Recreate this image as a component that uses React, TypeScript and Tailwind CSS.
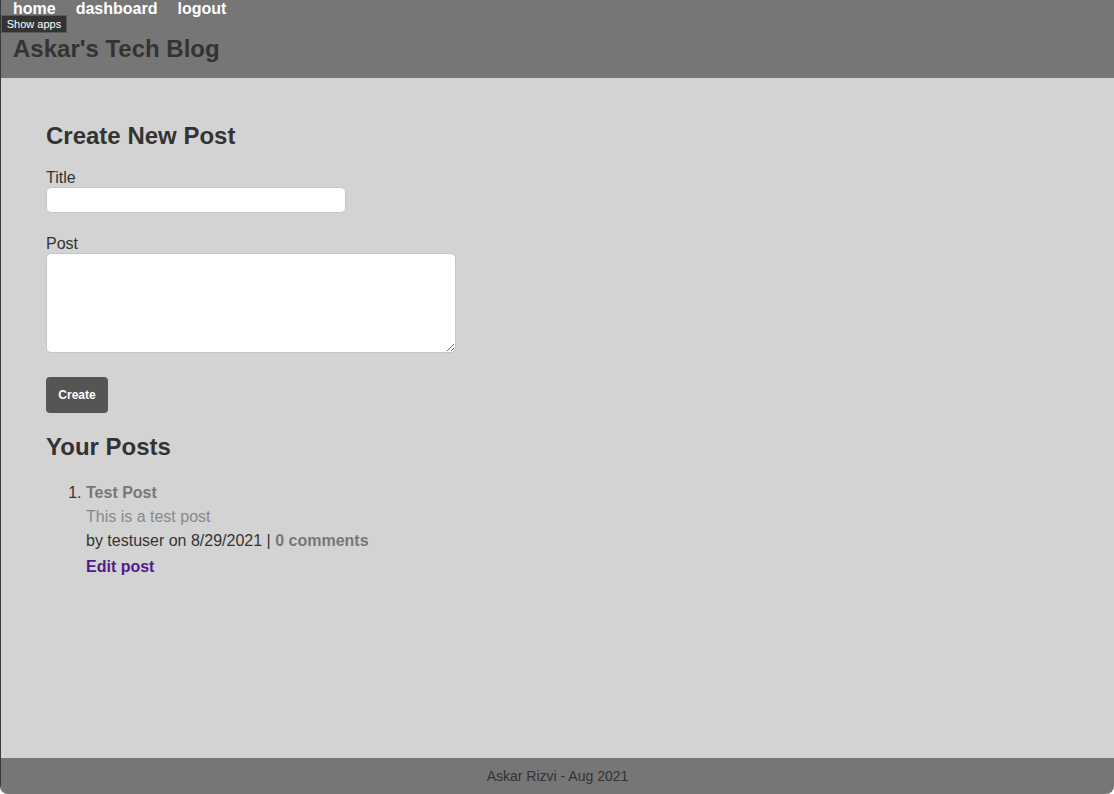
export default function App() {
  return (
    <div
      className="relative flex min-h-screen flex-col border-l border-[#3a3a3a] rounded-bl-lg rounded-br-lg overflow-hidden text-[#333]"
      style={{ fontFamily: '"Liberation Sans", Arial, sans-serif' }}
    >
      <header className="h-[78px] bg-[#767676] px-3">
        <nav className="flex gap-[20px] text-base font-bold leading-[17px] text-white">
          <a href="#">home</a>
          <a href="#">dashboard</a>
          <a href="#">logout</a>
        </nav>
        <h1 className="mt-[20px] text-[24px] font-bold leading-[24px] text-[#333]">Askar's Tech Blog</h1>
      </header>

      <div className="absolute left-0 top-[15px] flex h-[18px] w-[66px] items-center justify-center border border-[#5a5a5a] bg-[#333] text-[11px] text-white">
        Show apps
      </div>

      <main className="flex-1 bg-[#d3d3d3] px-[45px] pt-[44px]">
        <h2 className="text-[24px] font-bold leading-[28px]">Create New Post</h2>
        <form className="mt-[19px]">
          <label className="block text-base leading-[17px]">Title</label>
          <input className="mt-[1px] block h-[26px] w-[300px] rounded-[5px] border border-[#c4c4c4] bg-white" />
          <label className="mt-[22px] block text-base leading-[17px]">Post</label>
          <textarea className="mt-[1px] block h-[100px] w-[410px] rounded-[5px] border border-[#c4c4c4] bg-white" />
          <button
            type="button"
            className="mt-[24px] h-[36px] w-[62px] rounded-[4px] bg-[#555] text-[12px] font-bold text-white"
          >
            Create
          </button>
        </form>

        <h2 className="mt-[20px] text-[24px] font-bold leading-[28px]">Your Posts</h2>
        <ol className="mt-[20px] list-decimal pl-[40px] text-base leading-[24px]">
          <li>
            <div className="font-bold text-[#777]">Test Post</div>
            <div className="text-[#888]">This is a test post</div>
            <div>
              by testuser on 8/29/2021 | <span className="font-bold text-[#777]">0 comments</span>
            </div>
            <a href="#" className="mt-[2px] block font-bold text-[#551a8b]">Edit post</a>
          </li>
        </ol>
      </main>

      <footer className="flex h-[36px] items-center justify-center bg-[#767676] text-[14px] text-[#333]">
        Askar Rizvi - Aug 2021
      </footer>
    </div>
  );
}
